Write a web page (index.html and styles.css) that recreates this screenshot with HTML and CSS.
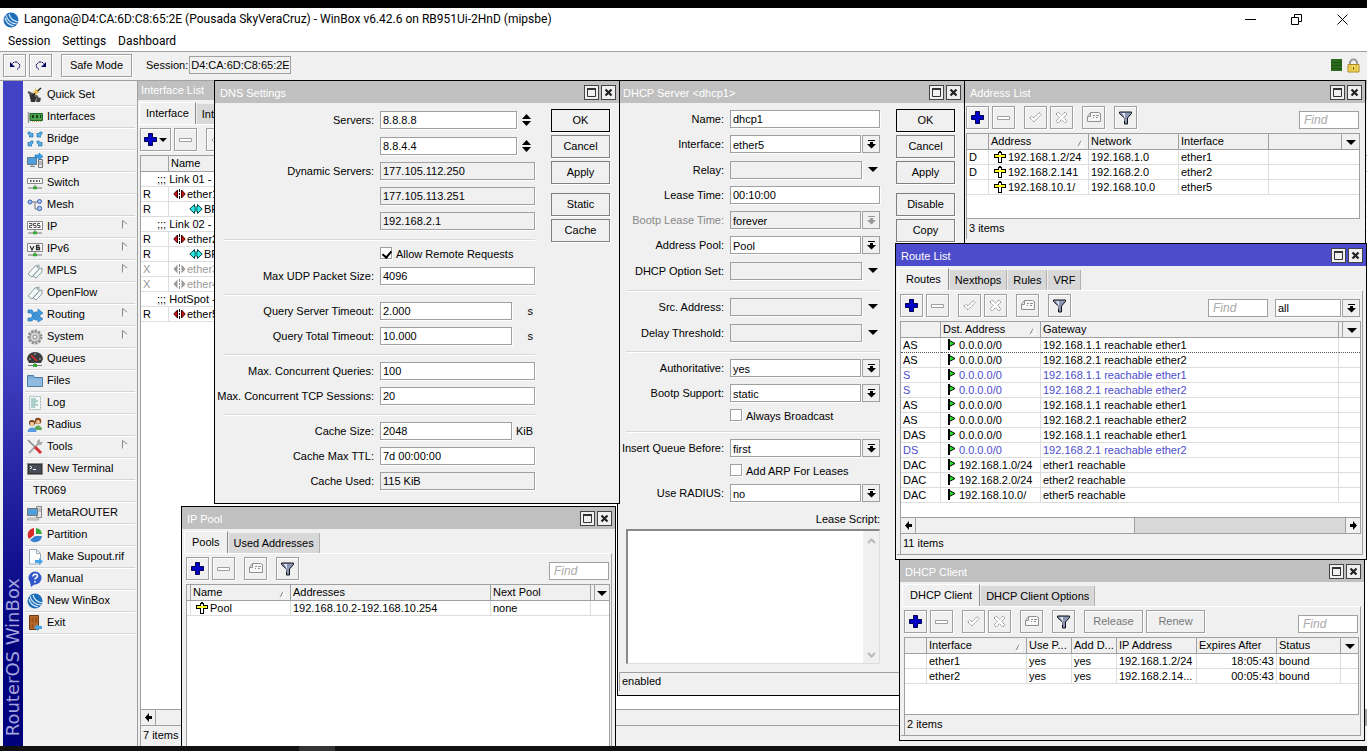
FILE: index.html
```html
<!DOCTYPE html>
<html lang="en">
<head>
<meta charset="utf-8">
<title>WinBox</title>
<link rel="stylesheet" href="styles.css">
</head>
<body>
<svg class="defs" aria-hidden="true">
  <symbol id="plus" viewBox="0 0 13 13"><path d="M4.500 .5h4v4h4v4h-4v4h-4v-4h-4v-4h4z" fill="#0000c8" stroke="#000050"/></symbol>
  <symbol id="minus" viewBox="0 0 13 13"><path d="M.5 5.500h12v3h-12z" fill="#fff" stroke="#a0a0a0"/></symbol>
  <symbol id="check" viewBox="0 0 13 13"><path d="M.8 7l2-2 2.200 2L10 1.500l2.200 2L5 11z" fill="#fff" stroke="#909090" stroke-dasharray="1.600 .6"/></symbol>
  <symbol id="cross" viewBox="0 0 13 13"><path d="M1 3l2-2 3.500 3.300L10 1l2 2-3.300 3.500L12 10l-2 2-3.500-3.300L3 12l-2-2 3.300-3.500z" fill="#fff" stroke="#909090" stroke-dasharray="1.600 .6"/></symbol>
  <symbol id="note" viewBox="0 0 14 13"><path d="M3.500 1.500h8l2 1v8h-13v-5z" fill="#f8f8f8" stroke="#909090"/><path d="M.5 5.500h3v-4M6 4.500h2M9 4.500h3M6 6.500h1M9 6.500h2" fill="none" stroke="#909090"/></symbol>
  <symbol id="filter" viewBox="0 0 13 14"><path d="M.5 1h12v1.500L8.500 7v6h-3V7L.5 2.500z" fill="#8b95b5" stroke="#111"/><path d="M3 2h3v8h-.5V6.500z" fill="#dfe4f2"/></symbol>
  <symbol id="addr" viewBox="0 0 12 12"><path d="M4.500 1.500h1v-1h1v1h1v2h4v3h-4v5h-3v-5h-4v-3h4z" fill="#fff" stroke="#000" shape-rendering="crispEdges"/><path d="M1 4h10v2H1z" fill="#ff2"/></symbol>
  <symbol id="flag" viewBox="0 0 8 11"><path d="M0 0h2v11H0z" fill="#000"/><path d="M1.500 1.500l5.500 3-5.500 3z" fill="#1ee61e" stroke="#000"/></symbol>
  <symbol id="drop" viewBox="0 0 9 10"><path d="M1 1h7v1H1zM3 3h3v2h3L4.500 9.500 0 5h3z"/></symbol>
  <symbol id="tri" viewBox="0 0 10 5"><path d="M0 0h10L5 5z"/></symbol>
  <symbol id="updown" viewBox="0 0 9 12"><path d="M0 5h9L4.500 0zM0 7h9L4.500 12z"/></symbol>
  <symbol id="max" viewBox="0 0 9 9"><path d="M.5 1h8v7.500h-8z" fill="none" stroke="#333"/><path d="M0 0h9v2H0z" fill="#333"/></symbol>
  <symbol id="close" viewBox="0 0 9 9"><path d="M1.500 1.500l6 6M7.500 1.500l-6 6" fill="none" stroke="#222" stroke-width="2.200"/></symbol>
  <symbol id="sort" viewBox="0 0 7 7"><path d="M1 6.500L4 .5" stroke="#888" fill="none"/><path d="M4 .5l2.500 6H1" stroke="#fff" fill="none"/></symbol>
  <symbol id="eth" viewBox="0 0 13 10"><path d="M4.500 1v8L.8 5zM8.500 1v8l3.700-4z" fill="#c81414" stroke="#400"/><path d="M6.500 0v3M6.500 4v2M6.500 7v3" stroke="#000"/></symbol>
  <symbol id="ethoff" viewBox="0 0 13 10"><path d="M4.500.5v9L.5 5zM8.500.5v9l4-4.500z" fill="#999"/><path d="M6.500 0v3M6.500 4v2M6.500 7v3" stroke="#888"/></symbol>
  <symbol id="br" viewBox="0 0 14 12"><path d="M.8 6l4.700-4.500V4h3V1.500L13.200 6l-4.700 4.500V8h-3v2.500z" fill="#2ee6e6" stroke="#044"/><path d="M5.500 6h3" stroke="#044"/></symbol>
  <symbol id="left" viewBox="0 0 7 9"><path d="M0 4.500L4 0v3h3v3H4v3z"/></symbol>
  <symbol id="right" viewBox="0 0 7 9"><path d="M7 4.500L3 0v3H0v3h3v3z"/></symbol>
  <symbol id="sub" viewBox="0 0 6 9"><path d="M.5 9V.5l5 4" fill="none" stroke="#888"/><path d="M5.500 4.500l-5 4" stroke="#fff"/></symbol>
  <symbol id="globe" viewBox="0 0 16 16"><circle cx="8" cy="8" r="7.500" fill="#1d6db8"/><path d="M3 3c1 5 5 9 11 9M6 2c1 4 4 7 9 8M2 6c1 4 4 7 9 8" stroke="#d5e8f8" stroke-width="1.200" fill="none"/></symbol>
  <symbol id="tag" viewBox="0 0 16 16"><path d="M1 11l7-8 4-1v4l-7 8zM6 13l6-7 3-1v4l-6 6z" fill="#f4f8f8" stroke="#8aa0a4"/><circle cx="10.500" cy="4" r=".8" fill="#678"/></symbol>
  <symbol id="net" viewBox="0 0 16 5"><path d="M8 0v3M1 3.500h14" stroke="#777"/><path d="M6 2h4v3H6z" fill="#3a3"/></symbol>
</svg>

<div class="strip"></div>
<header class="titlebar">
  <svg class="i16"><use href="#globe"/></svg>
  <h1>Langona@D4:CA:6D:C8:65:2E (Pousada SkyVeraCruz) - WinBox v6.42.6 on RB951Ui-2HnD (mipsbe)</h1>
  <div class="wincontrols">
    <button aria-label="Minimize"><svg width="11" height="11"><path d="M0 5.500h11" stroke="#000"/></svg></button>
    <button aria-label="Restore"><svg width="11" height="11"><path d="M.5 3.500h7v7h-7zM3.500 3V.5h7v7H8" fill="none" stroke="#000"/></svg></button>
    <button aria-label="Close"><svg width="11" height="11"><path d="M.5.5l10 10M10.500.5l-10 10" stroke="#000"/></svg></button>
  </div>
</header>
<nav class="menubar"><button>Session</button><button>Settings</button><button>Dashboard</button></nav>
<div class="topbar">
  <button class="tb" aria-label="Undo"><svg width="12" height="10"><path d="M2 5l3-3h3l3 3-1 3-2 1.500" fill="none" stroke="#000064" stroke-dasharray="2 .6"/><path d="M1 2v5h5z" fill="#000064"/></svg></button>
  <button class="tb" aria-label="Redo"><svg width="12" height="10"><path d="M10 5L7 2H4L1 5l1 3 2 1.500" fill="none" stroke="#000064" stroke-dasharray="2 .6"/><path d="M11 2v5H6z" fill="#000064"/></svg></button>
  <button class="tb safe">Safe Mode</button>
  <label for="sess">Session:</label><input id="sess" class="sess" value="D4:CA:6D:C8:65:2E" readonly>
  <div class="status">
    <svg width="11" height="12"><path d="M0 0h11v12H0z" fill="#2a6a1c"/><path d="M0 3.500h11M0 6.500h11M0 9.500h11" stroke="#1f5414"/></svg>
    <svg width="13" height="15"><path d="M3 7V4l2-2.500h3L10 4v3" fill="none" stroke="#999" stroke-width="2"/><path d="M1 6.500h11v7.500H1z" fill="#f5d75a" stroke="#a88a28"/><path d="M4 7v7M9 7v7" stroke="#d9b63a"/><path d="M6 9h1v3H6z" fill="#7a5c10"/></svg>
  </div>
</div>

<main class="main">
  <aside class="side">
    <div class="brand"><span>RouterOS WinBox</span></div>
    <ul class="menu">
      <li><button><svg class="i16"><path d="M2 6l8 4-2 5H4z" fill="#333"/><path d="M1 5l10 5" stroke="#555" stroke-width="2"/><path d="M5 9L14 1" stroke="#222" stroke-width="1.500"/><path d="M8 0l1 3 3-1-2 2 3 2-3 0-1 3-1-3-3-1 3-1z" fill="#e9bc50"/><path d="M10 10l4 1-1 4H9z" fill="#444"/></svg>Quick Set</button></li>
      <li><button><svg class="i16"><path d="M1.500 3v11" stroke="#999" stroke-width="1.500"/><path d="M3 4.500h12.500v7H3z" fill="#4da052" stroke="#1e6628"/><path d="M5 6h2v3H5zM9 6h2v3H9zM13 6h1v3h-1z" fill="#153f18"/><path d="M5 12.500h9" stroke="#caa93c" stroke-dasharray="1 1"/></svg>Interfaces</button></li>
      <li><button><svg class="i16"><path d="M1 1h2l2 2 1-1v4H2l1-1-2-2zM15 1h-2l-2 2-1-1v4h4l-1-1 2-2zM1 15v-4l1 1 2-2h2v2l-2 2 1 1zM15 15v-4l-1 1-2-2h-2v2l2 2-1 1z" fill="#55aee8" stroke="#2872ac" stroke-width=".7"/></svg>Bridge</button></li>
      <li><button><svg class="i16"><path d="M.5 4.500h9v7h-9z" fill="#4f9fdc" stroke="#678"/><path d="M3 13.500h5M5 12v2" stroke="#888"/><path d="M11.500 6.500h4v8h-4z" fill="#e8e8e8" stroke="#777"/><path d="M12 9h3M12 11h3" stroke="#888"/><path d="M8 2h4V0l4 3.500L12 7V5H8z" fill="#38a0e8" stroke="#1b6eb0" stroke-width=".6"/></svg>PPP</button></li>
      <li><button><svg class="i16"><path d="M.5 3.500h15v5H.5z" fill="#fafafa" stroke="#888"/><path d="M3 6h10" stroke="#555" stroke-width="2" stroke-dasharray="1.500 1.500"/><use href="#net" y="9.500" width="16" height="5"/></svg>Switch</button></li>
      <li><button><svg class="i16"><path d="M5 5h6M8 5v7h3" fill="none" stroke="#777"/><circle cx="3" cy="5" r="2" fill="#aac4f0" stroke="#3b62b0"/><circle cx="12.500" cy="4.500" r="2" fill="#aac4f0" stroke="#3b62b0"/><circle cx="12.500" cy="11.500" r="2.200" fill="#aac4f0" stroke="#3b62b0"/></svg>Mesh</button></li>
      <li><button><svg class="i16"><path d="M.5 2.500h15v8H.5z" fill="#fafafa" stroke="#888"/><path d="M2 4.500h3v2H2.500v2H5M6.500 8.500H9v-2H6.500v-2H9M10.500 8.500H13v-2h-2.500v-2H13" fill="none" stroke="#555"/><use href="#net" y="10.500" width="16" height="5"/></svg>IP<svg class="sub"><use href="#sub"/></svg></button></li>
      <li><button><svg class="i16"><path d="M.5 2.500h15v8H.5z" fill="#fafafa" stroke="#888"/><path d="M3 5l2 4 2-4M12.500 4.500h-3v4h3v-2h-3" fill="none" stroke="#333" stroke-width="1.300"/><use href="#net" y="10.500" width="16" height="5"/></svg>IPv6<svg class="sub"><use href="#sub"/></svg></button></li>
      <li><button><svg class="i16"><use href="#tag"/></svg>MPLS<svg class="sub"><use href="#sub"/></svg></button></li>
      <li><button><svg class="i16"><use href="#tag"/></svg>OpenFlow</button></li>
      <li><button><svg class="i16"><path d="M1 3h4l5 7h1V8l5 4-5 3v-2H8L4 6H1zM1 14v-3h3l4-6h3V2l5 4-5 4V8h-1l-5 6z" fill="#3f9be0" stroke="#2470b0" stroke-width=".6"/></svg>Routing<svg class="sub"><use href="#sub"/></svg></button></li>
      <li><button><svg class="i16"><circle cx="8" cy="8" r="6" fill="#ccc" stroke="#909090" stroke-width="3" stroke-dasharray="2.200 1.200"/><circle cx="8" cy="8" r="5" fill="#d4d4d4" stroke="#999"/><circle cx="8" cy="8" r="2" fill="#f4f4f4" stroke="#888"/></svg>System<svg class="sub"><use href="#sub"/></svg></button></li>
      <li><button><svg class="i16"><path d="M0 8a8 7 0 0 1 16 0l-2 4H2z" fill="#3b3b3b"/><path d="M4 4l6 6" stroke="#e03030" stroke-width="1.500"/><path d="M2 8h2M12 8h2M8 2v2" stroke="#bbb"/><use href="#net" y="11" width="16" height="5"/></svg>Queues</button></li>
      <li><button><svg class="i16"><path d="M.5 2.500h6l1 2h8v9H.5z" fill="#7ba8d4" stroke="#4f7ca8"/><path d="M1 5.500h14v7.500H1z" fill="#91bae0"/></svg>Files</button></li>
      <li><button><svg class="i16"><path d="M2.500 1.500h11v13h-11z" fill="#f2f8f6" stroke="#9fb5b5" stroke-dasharray="2 1"/><path d="M4 4h5M4 6h7M4 8h5M4 10h7M4 12h4" stroke="#6aa5a0"/></svg>Log</button></li>
      <li><button><svg class="i16"><circle cx="11" cy="4" r="3.200" fill="#8a4a1c"/><circle cx="11" cy="5" r="2" fill="#f0c498"/><path d="M7 13c0-6 8-6 8 0z" fill="#5aa858"/><circle cx="5" cy="6" r="3" fill="#6a3a18"/><circle cx="5" cy="7" r="2.200" fill="#f0c498"/><path d="M.5 15c0-6 9-6 9 0z" fill="#5a9be0"/></svg>Radius</button></li>
      <li><button><svg class="i16"><path d="M2 14L12 4" stroke="#aaa" stroke-width="2"/><path d="M10 5V2l3-2v3h3l-2 3h-3z" fill="#aaa"/><path d="M1 1l7 7" stroke="#888" stroke-width="1.500"/><path d="M8 8l6 6" stroke="#d83030" stroke-width="3"/></svg>Tools<svg class="sub"><use href="#sub"/></svg></button></li>
      <li><button><svg class="i16"><path d="M.5 2.500h15v11H.5z" fill="#333" stroke="#888"/><path d="M2 4h12v8H2z" fill="#484c58"/><path d="M3 5l2 1.500L3 8M6 8.500h3" fill="none" stroke="#fff"/></svg>New Terminal</button></li>
      <li><button class="noicon">TR069</button></li>
      <li><button><svg class="i16"><path d="M9.500 1.500h5v11h-5z" fill="#e6e6e6" stroke="#888"/><path d="M10 4h4M10 6h4" stroke="#999"/><path d="M.5 3.500h10v7H.5z" fill="#4f9fdc" stroke="#777"/><path d="M1 13h10l1 2H0z" fill="#ddd" stroke="#888" stroke-width=".6"/></svg>MetaROUTER</button></li>
      <li><button><svg class="i16"><path d="M7 8L7 1a7 7 0 0 0-5 11z" fill="#d82a2a"/><path d="M9 7V1a7 7 0 0 1 6 6z" fill="#37a83a"/><path d="M8 9h7a7 7 0 0 1-12 4z" fill="#3a80d0"/></svg>Partition</button></li>
      <li><button><svg class="i16"><path d="M2.500.5h7l4 4v10.500h-11z" fill="#fff" stroke="#9ab"/><path d="M9.500.5v4h4" fill="none" stroke="#9ab"/><path d="M8 11h4V9l4 3.500L12 16v-2H8z" fill="#48a4e8"/></svg>Make Supout.rif</button></li>
      <li><button><svg class="i16"><circle cx="8" cy="7" r="6.500" fill="#3158c8"/><path d="M3 11l1 5 4-3z" fill="#3158c8"/><path d="M6 5.500c0-3 4.500-3 4.500-.5C10.500 7 8 6.500 8 8.500M8 10v1.500" fill="none" stroke="#fff" stroke-width="1.500"/></svg>Manual</button></li>
      <li><button><svg class="i16"><use href="#globe"/></svg>New WinBox</button></li>
      <li><button><svg class="i16"><path d="M2.500.5h9v14h-9z" fill="#b8692c" stroke="#6e3a12"/><path d="M4.500 2.500h2v5h-2zM8 2.500h2v5H8zM4.500 9h2v4h-2z" fill="#96501c"/><path d="M15 11h-4V9l-4 3.500 4 3.500v-2h4z" fill="#48a4e8"/></svg>Exit</button></li>
    </ul>
  </aside>

  <div class="desktop">
    <section class="win w-if">
      <div class="wt"><h2>Interface List</h2></div>
      <div class="tabs"><button class="on">Interface</button><button>Interface List</button></div>
      <div class="panel">
        <div class="tools">
          <button class="tb addmenu" aria-label="Add"><svg width="13" height="13"><use href="#plus"/></svg><svg width="8" height="4"><use href="#tri"/></svg></button>
          <button class="tb" aria-label="Remove"><svg width="13" height="13"><use href="#minus"/></svg></button>
          <button class="tb gap" aria-label="Enable"><svg width="13" height="13"><use href="#check"/></svg></button>
        </div>
        <div class="list">
          <table>
            <colgroup><col class="c28"><col></colgroup>
            <thead><tr><th></th><th>Name</th></tr></thead>
            <tbody>
              <tr><td colspan="2" class="cm">;;; Link 01 -</td></tr>
              <tr><td>R</td><td><svg class="eth"><use href="#eth"/></svg>ether1</td></tr>
              <tr><td>R</td><td><svg class="brg"><use href="#br"/></svg>BR</td></tr>
              <tr><td colspan="2" class="cm">;;; Link 02 -</td></tr>
              <tr><td>R</td><td><svg class="eth"><use href="#eth"/></svg>ether2</td></tr>
              <tr><td>R</td><td><svg class="brg"><use href="#br"/></svg>BR</td></tr>
              <tr class="off"><td>X</td><td><svg class="eth"><use href="#ethoff"/></svg>ether3</td></tr>
              <tr class="off"><td>X</td><td><svg class="eth"><use href="#ethoff"/></svg>ether4</td></tr>
              <tr><td colspan="2" class="cm">;;; HotSpot -</td></tr>
              <tr><td>R</td><td><svg class="eth"><use href="#eth"/></svg>ether5</td></tr>
            </tbody>
          </table>
        </div>
        <div class="scroll"><button aria-label="Scroll left"><svg width="7" height="9"><use href="#left"/></svg></button><span class="thumb full"></span></div>
        <div class="foot">7 items</div>
      </div>
    </section>

    <section class="win w-dhcp">
      <div class="wt"><h2>DHCP Server &lt;dhcp1&gt;</h2><button aria-label="Maximize"><svg width="9" height="9"><use href="#max"/></svg></button><button aria-label="Close"><svg width="9" height="9"><use href="#close"/></svg></button></div>
      <div class="dialog">
        <div class="fields">
          <div class="row"><label for="d1">Name:</label><div class="f"><input id="d1" value="dhcp1"></div></div>
          <div class="row tall"><label for="d2">Interface:</label><div class="f"><select id="d2"><option>ether5</option></select><span class="db"><svg width="9" height="10"><use href="#drop"/></svg></span></div></div>
          <div class="row"><label for="d3">Relay:</label><div class="f"><input id="d3" class="ro" readonly><span class="tri"><svg width="10" height="5"><use href="#tri"/></svg></span></div></div>
          <div class="row"><label for="d4">Lease Time:</label><div class="f"><input id="d4" value="00:10:00"></div></div>
          <div class="row dim"><label for="d5">Bootp Lease Time:</label><div class="f"><select id="d5" class="ro"><option>forever</option></select><span class="db"><svg width="9" height="10"><use href="#drop"/></svg></span></div></div>
          <div class="row tall"><label for="d6">Address Pool:</label><div class="f"><select id="d6"><option>Pool</option></select><span class="db"><svg width="9" height="10"><use href="#drop"/></svg></span></div></div>
          <div class="row tall"><label for="d7">DHCP Option Set:</label><div class="f"><input id="d7" class="ro" readonly><span class="tri"><svg width="10" height="5"><use href="#tri"/></svg></span></div></div>
          <hr>
          <div class="row tall"><label for="d8">Src. Address:</label><div class="f"><input id="d8" class="ro" readonly><span class="tri"><svg width="10" height="5"><use href="#tri"/></svg></span></div></div>
          <div class="row"><label for="d9">Delay Threshold:</label><div class="f"><input id="d9" class="ro" readonly><span class="tri"><svg width="10" height="5"><use href="#tri"/></svg></span></div></div>
          <hr>
          <div class="row"><label for="d10">Authoritative:</label><div class="f"><select id="d10"><option>yes</option></select><span class="db"><svg width="9" height="10"><use href="#drop"/></svg></span></div></div>
          <div class="row"><label for="d11">Bootp Support:</label><div class="f"><select id="d11"><option>static</option></select><span class="db"><svg width="9" height="10"><use href="#drop"/></svg></span></div></div>
          <div class="row chk"><div class="f"><input type="checkbox" id="d12"><label for="d12">Always Broadcast</label></div></div>
          <hr>
          <div class="row"><label for="d13">Insert Queue Before:</label><div class="f"><select id="d13"><option>first</option></select><span class="db"><svg width="9" height="10"><use href="#drop"/></svg></span></div></div>
          <div class="row chk"><div class="f"><input type="checkbox" id="d14"><label for="d14">Add ARP For Leases</label></div></div>
          <div class="row"><label for="d15">Use RADIUS:</label><div class="f"><select id="d15"><option>no</option></select><span class="db"><svg width="9" height="10"><use href="#drop"/></svg></span></div></div>
          <label class="slabel" for="d16">Lease Script:</label>
          <div class="script"><textarea id="d16"></textarea><div class="vs"><svg width="9" height="6"><path d="M1 5l3.500-3.500L8 5" fill="none" stroke="#b8b8b8" stroke-width="2"/></svg><svg width="9" height="6"><path d="M1 1l3.500 3.500L8 1" fill="none" stroke="#b8b8b8" stroke-width="2"/></svg></div></div>
        </div>
        <div class="acts"><button class="def">OK</button><button>Cancel</button><button>Apply</button><button class="more">Disable</button><button>Copy</button></div>
      </div>
      <div class="state">enabled</div>
    </section>

    <section class="win w-dns">
      <div class="wt"><h2>DNS Settings</h2><button aria-label="Maximize"><svg width="9" height="9"><use href="#max"/></svg></button><button aria-label="Close"><svg width="9" height="9"><use href="#close"/></svg></button></div>
      <div class="dialog">
        <div class="fields">
          <div class="row tall"><label for="n1">Servers:</label><div class="f"><input id="n1" value="8.8.8.8"><span class="ud"><svg width="9" height="12"><use href="#updown"/></svg></span></div></div>
          <div class="row"><label for="n2"></label><div class="f"><input id="n2" aria-label="Second server" value="8.8.4.4"><span class="ud"><svg width="9" height="12"><use href="#updown"/></svg></span></div></div>
          <div class="row"><label for="n3">Dynamic Servers:</label><div class="f"><input id="n3" class="ro" readonly value="177.105.112.250"></div></div>
          <div class="row"><label for="n4"></label><div class="f"><input id="n4" aria-label="Dynamic server 2" class="ro" readonly value="177.105.113.251"></div></div>
          <div class="row"><label for="n5"></label><div class="f"><input id="n5" aria-label="Dynamic server 3" class="ro" readonly value="192.168.2.1"></div></div>
          <hr>
          <div class="row chk"><div class="f"><input type="checkbox" id="n6" checked><label for="n6">Allow Remote Requests</label></div></div>
          <div class="row"><label for="n7">Max UDP Packet Size:</label><div class="f"><input id="n7" value="4096"></div></div>
          <hr>
          <div class="row"><label for="n8">Query Server Timeout:</label><div class="f"><input id="n8" value="2.000"><span class="unit">s</span></div></div>
          <div class="row"><label for="n9">Query Total Timeout:</label><div class="f"><input id="n9" value="10.000"><span class="unit">s</span></div></div>
          <hr>
          <div class="row"><label for="n10">Max. Concurrent Queries:</label><div class="f"><input id="n10" value="100"></div></div>
          <div class="row"><label for="n11">Max. Concurrent TCP Sessions:</label><div class="f"><input id="n11" value="20"></div></div>
          <hr>
          <div class="row"><label for="n12">Cache Size:</label><div class="f"><input id="n12" value="2048"><span class="unit">KiB</span></div></div>
          <div class="row"><label for="n13">Cache Max TTL:</label><div class="f"><input id="n13" value="7d 00:00:00"></div></div>
          <div class="row"><label for="n14">Cache Used:</label><div class="f"><input id="n14" class="ro" readonly value="115 KiB"></div></div>
        </div>
        <div class="acts"><button class="def">OK</button><button>Cancel</button><button>Apply</button><button class="more">Static</button><button>Cache</button></div>
      </div>
    </section>

    <section class="win w-pool">
      <div class="wt"><h2>IP Pool</h2><button aria-label="Maximize"><svg width="9" height="9"><use href="#max"/></svg></button><button aria-label="Close"><svg width="9" height="9"><use href="#close"/></svg></button></div>
      <div class="tabs"><button class="on">Pools</button><button>Used Addresses</button></div>
      <div class="panel">
        <div class="tools">
          <button class="tb" aria-label="Add"><svg width="13" height="13"><use href="#plus"/></svg></button><button class="tb" aria-label="Remove"><svg width="13" height="13"><use href="#minus"/></svg></button><button class="tb gap" aria-label="Comment"><svg width="14" height="13"><use href="#note"/></svg></button><button class="tb gap" aria-label="Filter"><svg width="13" height="14"><use href="#filter"/></svg></button>
          <input class="find" placeholder="Find" aria-label="Find">
        </div>
        <div class="list">
          <table>
            <colgroup><col class="c4"><col class="c100"><col class="c200"><col class="c100"><col class="c4"><col></colgroup>
            <thead><tr><th></th><th>Name<svg class="sort"><use href="#sort"/></svg></th><th>Addresses</th><th>Next Pool</th><th></th><th class="dd"><svg width="10" height="5"><use href="#tri"/></svg></th></tr></thead>
            <tbody><tr><td></td><td><svg class="adr"><use href="#addr"/></svg>Pool</td><td>192.168.10.2-192.168.10.254</td><td>none</td><td colspan="2"></td></tr></tbody>
          </table>
        </div>
      </div>
    </section>

    <section class="win w-addr">
      <div class="wt"><h2>Address List</h2><button aria-label="Maximize"><svg width="9" height="9"><use href="#max"/></svg></button><button aria-label="Close"><svg width="9" height="9"><use href="#close"/></svg></button></div>
      <div class="panel">
        <div class="tools">
          <button class="tb" aria-label="Add"><svg width="13" height="13"><use href="#plus"/></svg></button><button class="tb" aria-label="Remove"><svg width="13" height="13"><use href="#minus"/></svg></button><button class="tb gap" aria-label="Enable"><svg width="13" height="13"><use href="#check"/></svg></button><button class="tb" aria-label="Disable"><svg width="13" height="13"><use href="#cross"/></svg></button><button class="tb gap" aria-label="Comment"><svg width="14" height="13"><use href="#note"/></svg></button><button class="tb gap" aria-label="Filter"><svg width="13" height="14"><use href="#filter"/></svg></button>
          <input class="find" placeholder="Find" aria-label="Find">
        </div>
        <div class="list">
          <table>
            <colgroup><col class="c22"><col class="c100"><col class="c90"><col class="c90"><col><col class="c17"></colgroup>
            <thead><tr><th></th><th>Address<svg class="sort"><use href="#sort"/></svg></th><th>Network</th><th>Interface</th><th></th><th class="dd"><svg width="10" height="5"><use href="#tri"/></svg></th></tr></thead>
            <tbody>
              <tr><td>D</td><td><svg class="adr"><use href="#addr"/></svg>192.168.1.2/24</td><td>192.168.1.0</td><td>ether1</td><td colspan="2"></td></tr>
              <tr><td>D</td><td><svg class="adr"><use href="#addr"/></svg>192.168.2.141</td><td>192.168.2.0</td><td>ether2</td><td colspan="2"></td></tr>
              <tr><td></td><td><svg class="adr"><use href="#addr"/></svg>192.168.10.1/</td><td>192.168.10.0</td><td>ether5</td><td colspan="2"></td></tr>
            </tbody>
          </table>
        </div>
        <div class="foot">3 items</div>
      </div>
    </section>

    <section class="win w-client">
      <div class="wt"><h2>DHCP Client</h2><button aria-label="Maximize"><svg width="9" height="9"><use href="#max"/></svg></button><button aria-label="Close"><svg width="9" height="9"><use href="#close"/></svg></button></div>
      <div class="tabs"><button class="on">DHCP Client</button><button>DHCP Client Options</button></div>
      <div class="panel">
        <div class="tools">
          <button class="tb" aria-label="Add"><svg width="13" height="13"><use href="#plus"/></svg></button><button class="tb" aria-label="Remove"><svg width="13" height="13"><use href="#minus"/></svg></button><button class="tb gap" aria-label="Enable"><svg width="13" height="13"><use href="#check"/></svg></button><button class="tb" aria-label="Disable"><svg width="13" height="13"><use href="#cross"/></svg></button><button class="tb gap" aria-label="Comment"><svg width="14" height="13"><use href="#note"/></svg></button><button class="tb gap" aria-label="Filter"><svg width="13" height="14"><use href="#filter"/></svg></button><button class="tb gap word">Release</button><button class="tb word">Renew</button>
          <input class="find" placeholder="Find" aria-label="Find">
        </div>
        <div class="list">
          <table>
            <colgroup><col class="c22"><col class="c100"><col class="c45"><col class="c45"><col class="c80"><col class="c80"><col><col class="c17"></colgroup>
            <thead><tr><th></th><th>Interface<svg class="sort"><use href="#sort"/></svg></th><th>Use P...</th><th>Add D...</th><th>IP Address</th><th>Expires After</th><th>Status</th><th class="dd"><svg width="10" height="5"><use href="#tri"/></svg></th></tr></thead>
            <tbody>
              <tr><td></td><td>ether1</td><td>yes</td><td>yes</td><td>192.168.1.2/24</td><td class="num">18:05:43</td><td>bound</td><td></td></tr>
              <tr><td></td><td>ether2</td><td>yes</td><td>yes</td><td>192.168.2.14...</td><td class="num">00:05:43</td><td>bound</td><td></td></tr>
            </tbody>
          </table>
        </div>
        <div class="foot">2 items</div>
      </div>
    </section>

    <section class="win w-route">
      <div class="wt"><h2>Route List</h2><button aria-label="Maximize"><svg width="9" height="9"><use href="#max"/></svg></button><button aria-label="Close"><svg width="9" height="9"><use href="#close"/></svg></button></div>
      <div class="tabs"><button class="on">Routes</button><button>Nexthops</button><button>Rules</button><button>VRF</button></div>
      <div class="panel">
        <div class="tools">
          <button class="tb" aria-label="Add"><svg width="13" height="13"><use href="#plus"/></svg></button><button class="tb" aria-label="Remove"><svg width="13" height="13"><use href="#minus"/></svg></button><button class="tb gap" aria-label="Enable"><svg width="13" height="13"><use href="#check"/></svg></button><button class="tb" aria-label="Disable"><svg width="13" height="13"><use href="#cross"/></svg></button><button class="tb gap" aria-label="Comment"><svg width="14" height="13"><use href="#note"/></svg></button><button class="tb gap" aria-label="Filter"><svg width="13" height="14"><use href="#filter"/></svg></button>
          <input class="find" placeholder="Find" aria-label="Find">
          <div class="f pick"><select aria-label="Table"><option>all</option></select><span class="db"><svg width="9" height="10"><use href="#drop"/></svg></span></div>
        </div>
        <div class="list">
          <table>
            <colgroup><col class="c40"><col class="c100"><col><col class="c4"><col class="c17"></colgroup>
            <thead><tr><th></th><th>Dst. Address<svg class="sort"><use href="#sort"/></svg></th><th>Gateway</th><th></th><th class="dd"><svg width="10" height="5"><use href="#tri"/></svg></th></tr></thead>
            <tbody>
              <tr class="sel"><td>AS</td><td><svg class="flg"><use href="#flag"/></svg>0.0.0.0/0</td><td>192.168.1.1 reachable ether1</td><td colspan="2"></td></tr>
              <tr><td>AS</td><td><svg class="flg"><use href="#flag"/></svg>0.0.0.0/0</td><td>192.168.2.1 reachable ether2</td><td colspan="2"></td></tr>
              <tr class="blue"><td>S</td><td><svg class="flg"><use href="#flag"/></svg>0.0.0.0/0</td><td>192.168.1.1 reachable ether1</td><td colspan="2"></td></tr>
              <tr class="blue"><td>S</td><td><svg class="flg"><use href="#flag"/></svg>0.0.0.0/0</td><td>192.168.2.1 reachable ether2</td><td colspan="2"></td></tr>
              <tr><td>AS</td><td><svg class="flg"><use href="#flag"/></svg>0.0.0.0/0</td><td>192.168.1.1 reachable ether1</td><td colspan="2"></td></tr>
              <tr><td>AS</td><td><svg class="flg"><use href="#flag"/></svg>0.0.0.0/0</td><td>192.168.2.1 reachable ether2</td><td colspan="2"></td></tr>
              <tr><td>DAS</td><td><svg class="flg"><use href="#flag"/></svg>0.0.0.0/0</td><td>192.168.1.1 reachable ether1</td><td colspan="2"></td></tr>
              <tr class="blue"><td>DS</td><td><svg class="flg"><use href="#flag"/></svg>0.0.0.0/0</td><td>192.168.2.1 reachable ether2</td><td colspan="2"></td></tr>
              <tr><td>DAC</td><td><svg class="flg"><use href="#flag"/></svg>192.168.1.0/24</td><td>ether1 reachable</td><td colspan="2"></td></tr>
              <tr><td>DAC</td><td><svg class="flg"><use href="#flag"/></svg>192.168.2.0/24</td><td>ether2 reachable</td><td colspan="2"></td></tr>
              <tr><td>DAC</td><td><svg class="flg"><use href="#flag"/></svg>192.168.10.0/</td><td>ether5 reachable</td><td colspan="2"></td></tr>
            </tbody>
          </table>
        </div>
        <div class="scroll"><button aria-label="Scroll left"><svg width="7" height="9"><use href="#left"/></svg></button><span class="track"><span class="thumb half"></span></span><button aria-label="Scroll right"><svg width="7" height="9"><use href="#right"/></svg></button></div>
        <div class="foot">11 items</div>
      </div>
    </section>
  </div>
</main>
<footer class="taskbar"><span></span></footer>
</body>
</html>
```
FILE: styles.css
```css
:root {
  --ui: "Liberation Sans", sans-serif;
  --face: #f0f0f0;
  --line: #a0a0a0;
}
* { box-sizing: border-box; }
body {
  margin: 0;
  height: 100vh;
  display: flex;
  flex-direction: column;
  overflow: hidden;
  background: #fff;
  color: #000;
  font: 11px/15px var(--ui);
}
button, input, select, textarea { font: inherit; color: inherit; margin: 0; border-radius: 0; outline: 0; }
button { padding: 0; white-space: nowrap; }
h1, h2, ul { margin: 0; padding: 0; font: inherit; }
svg { flex: none; }
.defs { position: absolute; width: 0; height: 0; }
.i16 { width: 16px; height: 16px; }

.strip { flex: none; height: 8px; background: #000; }
.titlebar { flex: none; display: flex; align-items: center; gap: 5px; height: 23px; padding: 0 19px 0 3px; font: 12px/15px Roboto, sans-serif; }
.wincontrols { display: flex; gap: 35px; margin-left: auto; padding-bottom: 1px; }
.wincontrols button { border: 0; background: none; width: 11px; height: 11px; display: flex; }
.menubar { flex: none; display: flex; gap: 12px; height: 20px; padding: 0 8px; font: 12px/20px Roboto, sans-serif; }
.menubar button { border: 0; background: none; }
.topbar { flex: none; display: flex; align-items: center; gap: 3px; height: 29px; padding: 0 7px 2px 3px; background: var(--face); border-top: 1px solid var(--line); }
.tb { display: flex; align-items: center; justify-content: center; width: 23px; height: 23px; background: var(--face); border: 1px solid var(--line); box-shadow: 1px 1px #fff, inset 1px 1px #fff; }
.tb.safe { width: 71px; margin: 0 11px 0 6px; }
.sess { width: 102px; height: 18px; margin-left: -2px; padding: 0 1px; background: var(--face); border: 1px solid var(--line); }
.status { display: flex; align-items: center; gap: 5px; margin-left: auto; }

.main { flex: 1; min-height: 0; display: flex; background: var(--face); }
.side { flex: none; display: flex; width: 138px; padding: 0 2px 0 3px; border-top: 1px solid var(--line); border-right: 1px solid var(--line); }
.brand { flex: none; width: 20px; padding-bottom: 10px; display: flex; align-items: flex-end; justify-content: center; background: linear-gradient(#4242c4 40%, #00007c 85%); color: #a2a2dc; font: 18px/20px "DejaVu Sans", sans-serif; }
.brand span { writing-mode: vertical-rl; transform: rotate(180deg); white-space: nowrap; }
.menu { flex: 1; min-width: 0; list-style: none; padding: 3px 0 0 2px; }
.menu li { height: 22px; border-bottom: 1px solid #d4d4d4; box-shadow: 0 1px #fff; }
.menu button { display: flex; align-items: center; gap: 4px; width: 100%; height: 21px; padding: 0 7px 0 2px; border: 0; background: none; text-align: left; }
.menu .noicon { padding-left: 8px; }
.menu .sub { width: 6px; height: 9px; margin: 0 0 4px auto; }
.desktop { flex: 1; position: relative; overflow: hidden; background: #fff; }

.win { position: absolute; display: flex; flex-direction: column; background: var(--face); border: 1px solid #000; }
.w-if { inset: 0; border: 0; border-top: 1px solid var(--line); }
.w-dns { left: 76px; top: 0; width: 406px; height: 424px; }
.w-dhcp { left: 479px; top: 0; width: 348px; height: 616px; }
.w-addr { left: 826px; top: 0; width: 402px; height: 164px; }
.w-route { left: 757px; top: 163px; width: 472px; height: 317px; }
.w-client { left: 761px; top: 479px; width: 466px; height: 182px; }
.w-pool { left: 43px; top: 426px; width: 435px; bottom: -12px; }
.wt { flex: none; display: flex; align-items: center; gap: 2px; height: 22px; padding: 2px 3px 0 5px; background: #c0c0c0; color: #fff; }
.wt h2 { flex: 1; }
.wt button { display: flex; align-items: center; justify-content: center; width: 15px; height: 15px; margin-bottom: 2px; background: #f0f0f0; border: 1px solid #444; }
.w-if .wt { height: 19px; padding: 0 3px; }
.w-route .wt { background: #4c4ccc; }

.tabs { flex: none; display: flex; align-items: flex-end; gap: 1px; height: 24px; padding: 2px 2px 0; }
.tabs button { height: 20px; padding: 0 5px; background: #d8d8d8; border: 0; border-right: 1px solid #b0b0b0; }
.tabs .on { height: 22px; padding: 0 7px; background: var(--face); border-top: 1px solid #fff; border-left: 1px solid #fff; border-right: 1px solid #888; }
.w-if .tabs { padding-left: 1px; }
.w-if .tabs .on { padding: 0 6px; }
.panel { flex: 1; min-height: 0; display: flex; flex-direction: column; margin: 0 3px 4px 1px; padding: 0 1px 0 3px; border-top: 1px solid #fff; border-right: 1px solid var(--line); border-bottom: 1px solid var(--line); }
.w-if .panel { margin: 0; padding: 0 0 0 2px; border-right: 0; border-bottom: 0; }
.w-addr .panel { margin: 0 4px 4px 0; padding-left: 1px; border: 0; }
.tools { flex: none; display: flex; align-items: flex-end; gap: 3px; padding: 3px 1px 4px 0; }
.tools .gap { margin-left: 6px; }
.tools .addmenu { width: 31px; gap: 2px; }
.tools .word { width: 59px; color: #777; }
.find { width: 60px; height: 18px; margin-left: auto; padding: 0 4px; border: 1px solid var(--line); background: #fff; font: italic 12px/16px "Liberation Sans", sans-serif; }
.find::placeholder { color: #aaa; opacity: 1; }
.pick { width: 85px; margin-left: 4px; }

.list { flex: 1; min-height: 0; overflow: hidden; background: #fff; border: 1px solid var(--line); }
.w-if .list { border-right: 0; }
table { width: 100%; table-layout: fixed; border-collapse: separate; border-spacing: 0; }
th, td { padding: 0 2px; text-align: left; font-weight: normal; white-space: nowrap; overflow: hidden; }
th { position: relative; height: 16px; line-height: 15px; background: var(--face); border-right: 1px solid var(--line); border-bottom: 1px solid var(--line); }
th:last-child { border-right: 0; }
td { height: 15px; line-height: 14px; vertical-align: top; border-right: 1px solid #ddd; border-bottom: 1px solid #ddd; }
td:last-child { border-right: 0; }
td svg { vertical-align: top; margin-top: 1px; }
td.cm { padding-left: 16px; }
.off { color: #999; }
.blue { color: #4c4ccc; }
.sel td { border-bottom: 1px dotted #555; }
td.num { text-align: right; }
th.dd { text-align: center; padding: 0; }
.dd svg { vertical-align: middle; }
.sort { position: absolute; right: 4px; top: 6px; width: 7px; height: 7px; }
td .eth { width: 13px; height: 10px; margin: 2px 1px 0 2px; }
.brg { width: 14px; height: 12px; margin-left: 18px; margin-right: 1px; }
.adr { width: 12px; height: 12px; margin-left: 3px; margin-right: 2px; }
.flg { width: 8px; height: 11px; margin-left: 5px; margin-right: 3px; }
.c4 { width: 4px; } .c17 { width: 17px; } .c22 { width: 22px; } .c28 { width: 28px; } .c40 { width: 40px; }
.c45 { width: 45px; } .c80 { width: 80px; } .c90 { width: 90px; } .c100 { width: 100px; } .c200 { width: 200px; }
.foot { flex: none; height: 20px; padding: 2px; border-left: 1px solid var(--line); }
.scroll { flex: none; display: flex; height: 16px; border: 1px solid var(--line); border-top: 0; background: #d8d8d8; }
.scroll button { display: flex; align-items: center; justify-content: center; width: 15px; height: 15px; border: 0; background: var(--face); border-right: 1px solid var(--line); }
.scroll button:last-child { border-right: 0; border-left: 1px solid var(--line); }
.track { flex: 1; display: flex; }
.thumb { background: var(--face); border-right: 1px solid var(--line); }
.full { flex: 1; }
.half { width: 51%; }

.dialog { flex: 1; min-height: 0; display: flex; gap: 16px; padding: 8px 9px 0; }
.w-dhcp .dialog { padding: 7px 9px 0 8px; }
.fields { flex: 1; min-width: 0; }
.row { display: flex; justify-content: flex-end; gap: 6px; height: 25px; line-height: 19px; }
.row.tall { height: 26px; }
.row > label { flex: 1; min-width: 0; display: flex; justify-content: flex-end; white-space: nowrap; }
.f { flex: none; display: flex; gap: 1px; width: 155px; height: 18px; }
.w-dhcp .row .f { width: 150px; }
.f input, .f select { flex: 1; min-width: 0; height: 18px; padding: 0 2px; background: #fff; border: 1px solid var(--line); appearance: none; box-shadow: 1px 1px #fff; }
.f .ro { background: var(--face); }
.f.pick { width: 85px; }
.db { display: flex; align-items: center; justify-content: center; width: 18px; height: 18px; background: var(--face); border: 1px solid var(--line); }
.tri { display: flex; justify-content: center; width: 17px; padding: 6px 0 0 2px; }
.ud { display: flex; justify-content: center; width: 17px; padding-top: 3px; }
.unit { width: 22px; padding-right: 2px; text-align: right; }
.dim label { color: #888; }
.dim .db { fill: #999; }
.row.chk { height: 20px; line-height: 14px; }
.f input[type="checkbox"] { flex: none; width: 12px; height: 12px; padding: 0; }
.f input[type="checkbox"]:checked { position: relative; }
.f input[type="checkbox"]:checked::after { content: ""; position: absolute; left: 3px; top: 1px; width: 4px; height: 7px; border: solid #000; border-width: 0 2px 2px 0; transform: rotate(40deg); }
.chk label { padding-left: 3px; }
hr { height: 2px; margin: 2px 0 6px; border: 0; border-top: 1px solid #d8d8d8; border-bottom: 1px solid #fff; }
.acts { display: flex; flex-direction: column; gap: 3px; width: 59px; margin-top: -2px; }
.w-dhcp .acts { margin-top: -1px; }
.acts button { height: 23px; background: var(--face); border: 1px solid #808080; box-shadow: 1px 1px #fff; }
.acts .def { border-color: #000; }
.acts .more { margin-top: 6px; }
.slabel { display: block; height: 20px; line-height: 20px; text-align: right; }
.script { display: flex; height: 135px; background: #fff; border: 1px solid #ddd; border-top: 2px solid #888; border-left: 2px solid #888; }
.script textarea { flex: 1; min-width: 0; border: 0; resize: none; background: #fff; }
.vs { display: flex; flex-direction: column; align-items: center; justify-content: space-between; width: 16px; padding: 7px 0 5px; background: var(--face); }
.state { flex: none; height: 19px; margin: 0 0 4px 1px; padding: 1px 2px; border: solid var(--line); border-width: 1px 0 0 1px; }

.taskbar { flex: none; height: 5px; padding-left: 299px; background: #111; }
.taskbar span { display: block; width: 36px; height: 5px; background: #333; }
```
